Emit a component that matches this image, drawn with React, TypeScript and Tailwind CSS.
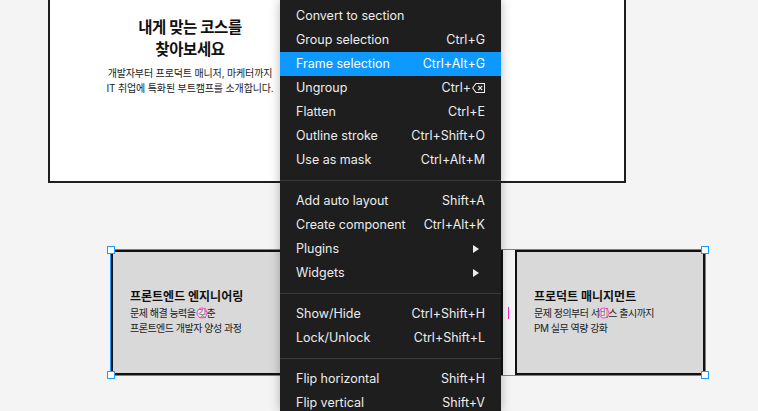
type MenuItem =
  | { sep: true }
  | { label: string; sc?: string; active?: boolean; sub?: boolean; back?: boolean };

const items: MenuItem[] = [
  { label: 'Convert to section' },
  { label: 'Group selection', sc: 'Ctrl+G' },
  { label: 'Frame selection', sc: 'Ctrl+Alt+G', active: true },
  { label: 'Ungroup', sc: 'Ctrl+', back: true },
  { label: 'Flatten', sc: 'Ctrl+E' },
  { label: 'Outline stroke', sc: 'Ctrl+Shift+O' },
  { label: 'Use as mask', sc: 'Ctrl+Alt+M' },
  { sep: true },
  { label: 'Add auto layout', sc: 'Shift+A' },
  { label: 'Create component', sc: 'Ctrl+Alt+K' },
  { label: 'Plugins', sub: true },
  { label: 'Widgets', sub: true },
  { sep: true },
  { label: 'Show/Hide', sc: 'Ctrl+Shift+H' },
  { label: 'Lock/Unlock', sc: 'Ctrl+Shift+L' },
  { sep: true },
  { label: 'Flip horizontal', sc: 'Shift+H' },
  { label: 'Flip vertical', sc: 'Shift+V' },
];

function Backspace() {
  return (
    <svg width="13" height="10" viewBox="0 0 13 10" className="ml-[1px]">
      <path d="M4 0.5 H12.5 V9.5 H4 L0.6 5 Z" fill="none" stroke="currentColor" strokeWidth="1.1" />
      <path d="M6.2 2.8 L10.2 7.2 M10.2 2.8 L6.2 7.2" stroke="currentColor" strokeWidth="1.2" />
    </svg>
  );
}

function Ring({ ch }: { ch: string }) {
  return (
    <span className="relative">
      {ch}
      <span className="absolute left-1/2 top-1/2 h-[11px] w-[11px] -translate-x-1/2 -translate-y-1/2 rounded-full border-[1.5px] border-[#ff3dcf] bg-white/40" />
    </span>
  );
}

function Handle({ className }: { className: string }) {
  return <div className={`absolute h-[8px] w-[8px] border border-[#1b9bff] bg-white ${className}`} />;
}

function Card({ w, title, line1, line2 }: { w: string; title: string; line1: React.ReactNode; line2: string }) {
  return (
    <div className={`flex h-[125px] items-center border-2 border-[#111] bg-[#d9d9d9] pl-[17px] ${w}`}>
      <div className="text-[#111]">
        <div className="text-[12px] font-bold leading-[16px]">{title}</div>
        <div className="mt-[1px] text-[10px] leading-[15px] tracking-[-0.5px] text-[#222]">{line1}</div>
        <div className="text-[10px] leading-[15px] tracking-[-0.5px] text-[#222]">{line2}</div>
      </div>
    </div>
  );
}

export default function App() {
  return (
    <div
      className="relative h-[411px] w-[758px] overflow-hidden bg-[#f4f4f4]"
      style={{ fontFamily: 'Inter, "Noto Sans CJK KR", sans-serif' }}
    >
      <div className="ml-[48px] h-[183px] w-[578px] border-2 border-t-0 border-[#1e1e1e] bg-white">
        <div className="w-[280px] pt-[17px] text-center text-[#111]">
          <div className="text-[15.5px] font-bold leading-[22px] tracking-[-0.4px]">
            내게 맞는 코스를
            <br />
            찾아보세요
          </div>
          <div className="mt-[5px] text-[10px] leading-[15px] tracking-[-0.15px] text-[#222]">
            개발자부터 프로덕트 매니저, 마케터까지
            <br />
            IT 취업에 특화된 부트캠프를 소개합니다.
          </div>
        </div>
      </div>

      <div className="mt-[67px] flex gap-[12px] pl-[111px]">
        <Card
          w="w-[392px]"
          title="프론트엔드 엔지니어링"
          line1={<>문제 해결 능력을 <Ring ch="갖" />춘</>}
          line2="프론트엔드 개발자 양성 과정"
        />
        <Card
          w="w-[190px]"
          title="프로덕트 매니지먼트"
          line1={<>문제 정의부터 서<Ring ch="비" />스 출시까지</>}
          line2="PM 실무 역량 강화"
        />
      </div>

      <div className="absolute left-[110px] top-[249px] h-[127px] w-[596px] border border-[#1b9bff]">
        <Handle className="-left-[4px] -top-[4px]" />
        <Handle className="-right-[4px] -top-[4px]" />
        <Handle className="-left-[4px] -bottom-[4px]" />
        <Handle className="-right-[4px] -bottom-[4px]" />
      </div>
      <div className="absolute left-[508px] top-[307px] h-[12px] w-[1px] bg-[#ff24bd]" />

      <div className="absolute left-[280px] top-0 h-[411px] w-[221px] bg-[#1e1e1e] pt-[4px] text-[12.5px] text-[#ececec] shadow-[0_0_10px_rgba(0,0,0,0.28)]">
        {items.map((it, i) =>
          'sep' in it ? (
            <div key={i} className="my-[8px] h-px bg-[#3a3a3a]" />
          ) : (
            <div
              key={i}
              className={`flex h-[24px] items-center justify-between px-[16px] ${it.active ? 'bg-[#0d99ff] text-white' : ''}`}
            >
              <span>{it.label}</span>
              {it.sc && (
                <span className="flex items-center">
                  {it.sc}
                  {it.back && <Backspace />}
                </span>
              )}
              {it.sub && (
                <svg width="6" height="8" viewBox="0 0 6 8" className="mr-[6px]">
                  <path d="M0 0 L6 4 L0 8 Z" fill="currentColor" />
                </svg>
              )}
            </div>
          )
        )}
      </div>
    </div>
  );
}
